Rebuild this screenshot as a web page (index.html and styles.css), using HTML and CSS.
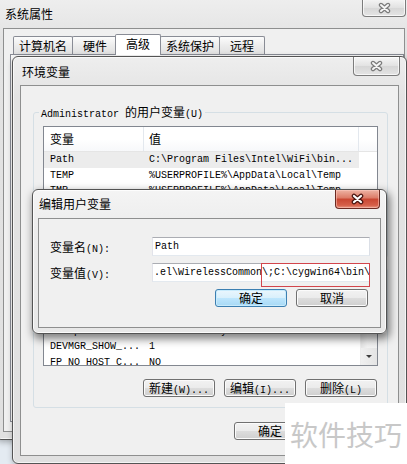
FILE: index.html
```html
<!DOCTYPE html>
<html lang="zh-CN">

<head>
    <meta charset="UTF-8">
    <title>编辑用户变量</title>
    <link rel="stylesheet" href="styles.css">
</head>

<body>
<div class="desktop">

    <!-- 系统属性 -->
    <div class="win win-sys">
        <div class="title-bar">
            <span class="title">系统属性</span>
            <span class="close">
                <svg width="15" height="12" viewBox="0 0 15 12"><path d="M4 3l7 6M11 3l-7 6" stroke="#7b7b7b" stroke-width="4.4" stroke-linecap="round" fill="none"/><path d="M4 3l7 6M11 3l-7 6" stroke="#f6f6f6" stroke-width="2" stroke-linecap="round" fill="none"/></svg>
            </span>
        </div>
        <div class="client sys-client">
            <div class="tabs">
                <span class="tab">计算机名</span>
                <span class="tab">硬件</span>
                <span class="tab active">高级</span>
                <span class="tab">系统保护</span>
                <span class="tab">远程</span>
            </div>
            <div class="tab-pane"></div>
        </div>
    </div>

    <!-- 环境变量 -->
    <div class="win win-env">
        <div class="title-bar">
            <span class="title">环境变量</span>
            <span class="close">
                <svg width="15" height="12" viewBox="0 0 15 12"><path d="M4 3l7 6M11 3l-7 6" stroke="#7b7b7b" stroke-width="4.4" stroke-linecap="round" fill="none"/><path d="M4 3l7 6M11 3l-7 6" stroke="#f6f6f6" stroke-width="2" stroke-linecap="round" fill="none"/></svg>
            </span>
        </div>
        <div class="client env-client">
            <fieldset class="group">
                <legend><span class="en">Administrator </span>的用户变量<span class="en">(U)</span></legend>
                <div class="list list-user">
                    <div class="list-main">
                        <div class="list-head"><span class="c1">变量</span><span class="c2">值</span></div>
                        <div class="row selected"><span class="c1">Path</span><span class="c2">C:\Program Files\Intel\WiFi\bin...</span></div>
                        <div class="row"><span class="c1">TEMP</span><span class="c2">%USERPROFILE%\AppData\Local\Temp</span></div>
                        <div class="row"><span class="c1">TMP</span><span class="c2">%USERPROFILE%\AppData\Local\Temp</span></div>
                    </div>
                </div>
                <div class="btn-row">
                    <button class="btn">新建<span class="en">(N)...</span></button>
                    <button class="btn">编辑<span class="en">(E)...</span></button>
                    <button class="btn">删除<span class="en">(D)</span></button>
                </div>
            </fieldset>
            <fieldset class="group">
                <legend>系统变量<span class="en">(S)</span></legend>
                <div class="list list-sys">
                    <div class="list-main">
                        <div class="list-head"><span class="c1">变量</span><span class="c2">值</span></div>
                        <div class="row"><span class="c1">asl.log</span><span class="c2">Destination=file</span></div>
                        <div class="row"><span class="c1">ComSpec</span><span class="c2">C:\Windows\system32\cmd.exe</span></div>
                        <div class="row"><span class="c1">DEVMGR_SHOW_...</span><span class="c2">1</span></div>
                        <div class="row"><span class="c1">FP_NO_HOST_C...</span><span class="c2">NO</span></div>
                        <div class="row"><span class="c1">NUMBER_OF_PR...</span><span class="c2">4</span></div>
                    </div>
                    <div class="scrollbar">
                        <span class="sb-btn"></span>
                        <span class="sb-btn down"><i class="arrow"></i></span>
                    </div>
                </div>
                <div class="btn-row">
                    <button class="btn">新建<span class="en">(W)...</span></button>
                    <button class="btn">编辑<span class="en">(I)...</span></button>
                    <button class="btn">删除<span class="en">(L)</span></button>
                </div>
            </fieldset>
            <div class="btn-row dialog-btns">
                <button class="btn">确定</button>
                <button class="btn">取消</button>
            </div>
        </div>
    </div>

    <!-- 编辑用户变量 -->
    <div class="win win-edit">
        <div class="title-bar">
            <span class="title">编辑用户变量</span>
            <span class="close close-red">
                <svg width="15" height="12" viewBox="0 0 15 12"><path d="M4 3l7 6M11 3l-7 6" stroke="#4a1510" stroke-width="4.6" stroke-linecap="round" fill="none"/><path d="M4 3l7 6M11 3l-7 6" stroke="#fff" stroke-width="2.2" stroke-linecap="round" fill="none"/></svg>
            </span>
        </div>
        <div class="client edit-client">
            <div class="form-row">
                <label>变量名<span class="en">(N):</span></label>
                <div class="text-box">Path</div>
            </div>
            <div class="form-row">
                <label>变量值<span class="en">(V):</span></label>
                <div class="text-box scrolled">.el\WirelessCommon\;C:\cygwin64\bin\</div>
            </div>
            <div class="btn-row edit-btns">
                <button class="btn btn-default">确定</button>
                <button class="btn">取消</button>
            </div>
        </div>
    </div>

    <div class="red-box"></div>

    <div class="watermark">软件技巧</div>

</div>
</body>

</html>
```

FILE: styles.css
```css
* {
    box-sizing: border-box;
}

body {
    margin: 0;
    font-family: "Noto Sans CJK SC", sans-serif;
    font-size: 12px;
    color: #000;
    background: #e4ebf2;
}

.desktop {
    position: relative;
    width: 407px;
    height: 464px;
    overflow: hidden;
}

.en {
    font-family: "Liberation Mono", monospace;
    font-size: 10px;
    line-height: 10px;
}

/* windows */

.win {
    position: absolute;
    display: flex;
    flex-direction: column;
    padding: 0 7px 7px;
    border: 1px solid #545454;
    border-radius: 6px;
    background: linear-gradient(#eeeeee, #e3e3e3 40px, #e0e0e0);
    box-shadow: inset 0 0 0 1px rgba(255, 255, 255, 0.65), 1px 2px 6px rgba(0, 0, 0, 0.3);
}

.win-sys {
    left: -5px;
    top: -2px;
    width: 418px;
    height: 442px;
}

.win-env {
    left: 12px;
    top: 56px;
    width: 395px;
    height: 408px;
}

.win-edit {
    left: 32px;
    top: 189px;
    width: 355px;
    height: 145px;
    padding: 0 5px 5px;
    background: linear-gradient(#f4f4f4, #ececec 40px, #e8e8e8);
    box-shadow: inset 0 0 0 1px rgba(255, 255, 255, 0.8), 2px 4px 9px 1px rgba(0, 0, 0, 0.5);
}

.title-bar {
    display: flex;
    justify-content: space-between;
    align-items: flex-start;
    height: 28px;
    flex-shrink: 0;
}

.win-sys .title-bar {
    height: 29px;
}

.title {
    padding: 7px 0 0 2px;
    line-height: 16px;
}

.win-edit .title {
    padding: 6px 0 0 1px;
}

.close {
    display: flex;
    align-items: center;
    justify-content: center;
    width: 47px;
    height: 19px;
    margin-right: -1px;
    border: 1px solid #7c7c7c;
    border-top: none;
    border-radius: 0 0 4px 4px;
    background: linear-gradient(#f6f6f6, #e2e2e2 50%, #d6d6d6 51%, #e4e4e4);
    box-shadow: inset 0 0 0 1px rgba(255, 255, 255, 0.7);
}

.win-sys .close {
    width: 44px;
    height: 18px;
}

.close-red {
    width: 45px;
    margin-right: 1px;
    border-color: #6b2a22;
    background: linear-gradient(#eeb3a4, #dc7a66 45%, #c94632 50%, #d6604a 85%, #e89a86);
    box-shadow: inset 0 0 0 1px rgba(255, 205, 195, 0.5);
}

.client {
    flex: 1;
    border: 1px solid #8e8f8f;
    background: #f0f0f0;
}

/* 系统属性 */

.sys-client {
    display: flex;
    flex-direction: column;
    padding: 5px 0 9px 6px;
}

.tabs {
    display: flex;
    align-items: flex-end;
    margin-left: 3px;
}

.tab {
    min-width: 46px;
    height: 18px;
    margin-right: -1px;
    padding: 0 5px;
    border: 1px solid #898c95;
    border-bottom: none;
    border-radius: 2px 2px 0 0;
    background: linear-gradient(#fcfcfc, #ececec 50%, #e0e0e0);
    line-height: 17px;
    text-align: center;
}

.tab.active {
    position: relative;
    z-index: 1;
    height: 21px;
    margin: 0 -1px -1px -2px;
    padding: 0 7px;
    background: #fff;
    line-height: 18px;
}

.tab-pane {
    flex: 1;
    border: 1px solid #898c95;
    background: #fafafa;
}

/* 环境变量 */

.env-client {
    padding: 19px 10px 0 12px;
}

.group {
    min-width: 0;
    margin: 0 0 3px;
    padding: 7px 9px 10px;
    border: 1px solid #d5dfe5;
    border-radius: 3px;
}

.group legend {
    height: 14px;
    margin-left: -4px;
    padding: 0 2px;
    line-height: 14px;
}

.list {
    display: flex;
    border: 1px solid #828790;
    background: #fff;
    overflow: hidden;
}

.list-user {
    height: 90px;
}

.list-sys {
    height: 84px;
}

.list-main {
    flex: 1;
    overflow: hidden;
}

.list-head {
    display: flex;
    height: 25px;
    border-bottom: 1px solid #e5e5e5;
    background: linear-gradient(#ffffff, #ffffff 50%, #f7f8fa);
    align-items: center;
}

.list-head span {
    height: 100%;
    line-height: 24px;
    border-right: 1px solid #e3e8ee;
}

.c1 {
    flex: none;
    width: 100px;
    padding-left: 6px;
}

.c2 {
    flex: none;
    width: 215px;
    padding-left: 5px;
}

.row {
    display: flex;
    width: 315px;
    height: 15.7px;
    line-height: 15.7px;
    font-family: "Liberation Mono", monospace;
    font-size: 10px;
    white-space: nowrap;
}

.row.selected {
    background: #ececec;
}

.scrollbar {
    display: flex;
    flex-direction: column;
    justify-content: space-between;
    width: 17px;
    background: linear-gradient(90deg, #e6e6e6, #f3f3f3 40%, #f1f1f1);
    border-left: 1px solid #ececec;
}

.sb-btn {
    display: flex;
    align-items: center;
    justify-content: center;
    height: 17px;
    background: linear-gradient(90deg, #f0f0f0, #e4e4e4);
}

.arrow {
    width: 0;
    height: 0;
    border-left: 3px solid transparent;
    border-right: 3px solid transparent;
    border-top: 3px solid #3c3c3c;
}

.btn-row {
    display: flex;
    justify-content: flex-end;
    gap: 9px;
    margin-top: 13px;
    margin-right: 1px;
}

.dialog-btns {
    margin-top: 14px;
}

.btn {
    width: 72px;
    height: 18px;
    padding: 0;
    border: 1px solid #707070;
    border-radius: 3px;
    background: linear-gradient(#f2f2f2, #ebebeb 49%, #dddddd 50%, #cfcfcf);
    box-shadow: inset 0 0 0 1px #fbfbfb;
    font-family: inherit;
    font-size: 12px;
    line-height: 16px;
    color: #000;
}

.btn-default {
    border-color: #3c7fb1;
    background: linear-gradient(#eaf6fd, #d9f0fc 49%, #bee6fd 50%, #a7d9f5);
    box-shadow: inset 0 0 0 1px #c8ebfc;
}

/* 编辑用户变量 */

.edit-client {
    padding: 18px 10px 0 11px;
}

.form-row {
    display: flex;
    align-items: center;
    height: 19px;
    margin-bottom: 7px;
}

.form-row label {
    width: 102px;
}

.text-box {
    flex: 1;
    height: 19px;
    padding: 0 2px;
    border: 1px solid;
    border-color: #abadb3 #dbdfe6 #e3e9ef #e2e3ea;
    background: #fff;
    font-family: "Liberation Mono", monospace;
    font-size: 10px;
    line-height: 17px;
    white-space: nowrap;
    overflow: hidden;
}

.text-box.scrolled {
    padding-left: 1px;
}

.edit-btns {
    margin-top: 6px;
    margin-right: 2px;
}

.red-box {
    position: absolute;
    left: 261px;
    top: 263px;
    width: 109px;
    height: 24px;
    border: 1px solid #d2454c;
}

.watermark {
    position: absolute;
    left: 285px;
    top: 403px;
    right: 0;
    bottom: 0;
    padding: 17px 0 0 5px;
    background: #fff;
    color: #c8c8c8;
    font-size: 28px;
    line-height: 28px;
    white-space: nowrap;
}
```
